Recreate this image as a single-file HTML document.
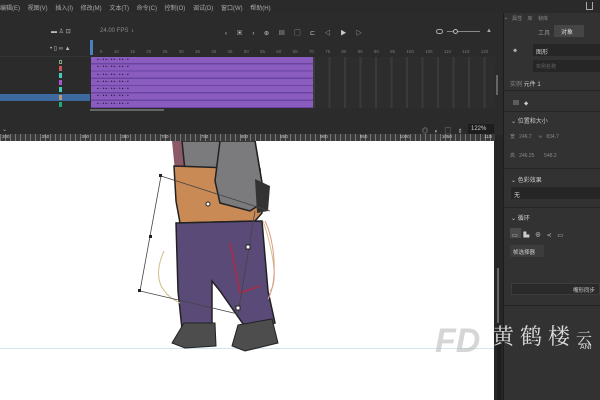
<!DOCTYPE html>
<html><head><meta charset="utf-8"><style>
*{margin:0;padding:0;box-sizing:border-box}
html,body{width:600px;height:400px;overflow:hidden}
body{background:#262626;position:relative;font-family:"Liberation Sans","Noto Sans CJK SC",sans-serif;color:#bbb}
.a{position:absolute}
.t{font-size:6px;color:#aaa;white-space:nowrap}
</style></head><body>
<div class="a" style="left:0;top:0;width:600px;height:13px;background:#2a2a2a"></div>
<div class="a t" style="left:0;top:3px;word-spacing:6px">编辑(E) 视图(V) 插入(I) 修改(M) 文本(T) 命令(C) 控制(O) 调试(D) 窗口(W) 帮助(H)</div>
<div class="a" style="left:586px;top:2px;width:7px;height:8px;border:1px solid #aaa;border-top:none"></div>
<div class="a" style="left:0;top:13px;width:503px;height:122px;background:#2b2b2b"></div>
<div class="a t" style="left:100px;top:28px;color:#888">24.00 FPS</div>
<div class="a t" style="left:131px;top:28px">↓</div>
<div class="a t" style="left:51px;top:28px;color:#bbb">▬ ♙ ⊡</div>
<div class="a t" style="left:50px;top:45px;color:#bbb">• ▯ ∞ ▲</div>
<div class="a t" style="left:225px;top:28px;color:#ccc;word-spacing:8px">‹ ▣ › ⊛ ▤ ▢ ⊏ ◁ ▶ ▷</div>
<div class="a" style="left:436px;top:29px;width:7px;height:5px;border:1px solid #aaa;border-radius:3px"></div>
<div class="a" style="left:447px;top:31px;width:33px;height:1px;background:#888"></div>
<div class="a" style="left:453px;top:29px;width:5px;height:5px;border:1px solid #bbb;border-radius:50%;background:#2b2b2b"></div>
<div class="a t" style="left:486px;top:28px">▲</div>
<div class="a" style="left:90px;top:40px;width:3px;height:15px;background:#4a7fc0"></div>
<div class="a t" style="left:100px;top:49px;font-size:4.5px;color:#777;word-spacing:10px;width:395px;overflow:hidden">5 10 15 20 25 30 35 40 45 50 55 60 65 70 75 80 85 90 95 100 105 110 115 120 125</div>
<div class="a" style="left:0;top:56px;width:90px;height:1px;background:#333"></div>
<div class="a" style="left:0;top:94px;width:90px;height:7px;background:#3d6a9e"></div>
<div class="a" style="left:59px;top:60px;width:3px;height:4px;border:1px solid #7a7"></div>
<div class="a" style="left:59px;top:66px;width:3px;height:5px;background:#c55"></div>
<div class="a" style="left:59px;top:73px;width:3px;height:5px;background:#4cb"></div>
<div class="a" style="left:59px;top:80px;width:3px;height:5px;background:#a5c"></div>
<div class="a" style="left:59px;top:87px;width:3px;height:5px;background:#4cb"></div>
<div class="a" style="left:59px;top:95px;width:3px;height:5px;background:#b97"></div>
<div class="a" style="left:59px;top:102px;width:3px;height:5px;background:#2a7"></div>
<div class="a" style="left:313px;top:57px;width:182px;height:51px;background:repeating-linear-gradient(90deg,#3a3a3a 0 2px,#2d2d2d 2px 15.5px)"></div>
<div class="a" style="left:91px;top:57px;width:222px;height:51px;background:repeating-linear-gradient(180deg,#8a5cc0 0 6px,#6a45a0 6px 7.3px)"></div>
<div class="a t" style="left:97px;top:57px;font-size:5px;line-height:7.3px;color:#2a1a40;letter-spacing:1px">▪·•▪·•▪·•▪·•<br>▪·•▪·•▪·•▪·•<br>▪·•▪·•▪·•▪·•<br>▪·•▪·•▪·•▪·•<br>▪·•▪·•▪·•▪·•<br>▪·•▪·•▪·•▪·•<br>▪·•▪·•▪·•▪·•</div>
<div class="a" style="left:90px;top:109px;width:74px;height:2px;background:#666"></div>
<div class="a" style="left:496px;top:75px;width:2px;height:20px;background:#666"></div>
<div class="a t" style="left:2px;top:126px">⌄</div>
<div class="a t" style="left:422px;top:126px;color:#bbb;word-spacing:5px">◎ ◐ ▢ ⇕</div>
<div class="a" style="left:468px;top:124px;width:26px;height:10px;background:#1e1e1e;font-size:6px;padding:2px 3px;color:#ccc;overflow:hidden">122% ⌄</div>
<div class="a" style="left:0;top:134px;width:495px;height:7px;background:#3a3a3a;background-image:repeating-linear-gradient(90deg,#777 0 1px,transparent 1px 5px)"></div>
<div class="a t" style="left:2px;top:134px;font-size:4.5px;color:#ccc;word-spacing:31px;width:490px;overflow:hidden">200 250 300 350 700 750 800 850 900 950 1000 1050 1100 1150 1200 1250 1300 1350</div>
<div class="a" style="left:0;top:141px;width:494px;height:259px;background:#fff"></div>
<div class="a" style="left:0;top:348px;width:494px;height:1px;background:#cfe6ea"></div>
<svg class="a" style="left:120px;top:141px" width="200" height="220">
<path d="M52 0 L82 0 L80 25 L55 30 Z" fill="#8c5a66"/>
<path d="M62 0 L135 0 L140 30 L145 60 L125 70 L72 70 L65 30 Z" fill="#7b7b7e" stroke="#222" stroke-width="1.5"/>
<path d="M54 25 L140 28 L142 72 L135 80 L60 82 L56 60 Z" fill="#c98a55" stroke="#222" stroke-width="1.5"/>
<path d="M100 0 L135 0 L140 30 L145 60 L130 70 L100 62 L95 40 Z" fill="#7b7b7e" stroke="#222" stroke-width="1.5"/>
<path d="M135 38 L150 45 L148 70 L137 72 Z" fill="#333"/>
<path d="M56 82 L142 80 L148 150 L155 182 L128 190 L100 150 L92 140 L92 190 L62 188 L58 150 Z" fill="#5a4a78" stroke="#222" stroke-width="1.5"/>
<path d="M64 182 L95 182 L96 205 L65 207 L52 202 Z" fill="#4d4d4d" stroke="#222"/>
<path d="M118 184 L152 178 L158 202 L125 210 L112 205 Z" fill="#4d4d4d" stroke="#222"/>
<path d="M110 102 L120 152 L140 145" stroke="#a03050" stroke-width="1.8" fill="none"/>
<path d="M44 110 C35 130 35 150 60 162 M143 80 C150 100 160 140 150 150" stroke="#cfc08a" fill="none"/>
<path d="M145 80 C155 100 158 140 148 158" stroke="#d98" fill="none"/>
<path d="M41 35 L150 70 M41 35 L20 150 L118 173 L135 70" stroke="#444" fill="none" stroke-width="0.8"/>
<rect x="39" y="33" width="3" height="3" fill="#222"/><rect x="18" y="148" width="3" height="3" fill="#222"/><rect x="29" y="94" width="3" height="3" fill="#222"/>
<rect x="116" y="165" width="4" height="4" fill="#fff" stroke="#222"/>
<rect x="126" y="104" width="4" height="4" fill="#fff" stroke="#222"/>
<circle cx="88" cy="63" r="2" fill="#fff" stroke="#222"/>
</svg>
<div class="a" style="left:435px;top:322px;font-size:34px;color:#bbb;font-style:italic;font-weight:bold;opacity:.6">FD</div>
<div class="a" style="left:497px;top:335px;width:4px;height:65px;background:#1e1e1e"></div>
<div class="a" style="left:497px;top:268px;width:2px;height:55px;background:#666"></div>
<div class="a" style="left:503px;top:13px;width:97px;height:387px;background:#323232;border-left:1px solid #1c1c1c;overflow:hidden"></div>
<div class="a t" style="left:505px;top:15px;font-size:5px;color:#888;word-spacing:4px">▪ 属性 库 帧库</div>
<div class="a t" style="left:538px;top:28px;color:#888">工具</div>
<div class="a" style="left:554px;top:25px;width:30px;height:12px;background:#454545;font-size:6px;color:#ddd;padding:2px 7px">对象</div>
<div class="a t" style="left:513px;top:48px">⬥</div>
<div class="a" style="left:533px;top:44px;width:67px;height:12px;background:#262626;font-size:6px;color:#ccc;padding:3px">图形</div>
<div class="a" style="left:533px;top:60px;width:67px;height:12px;background:#262626;font-size:5px;color:#666;padding:3px">实例名称</div>
<div class="a t" style="left:510px;top:79px;color:#888">实例 <span style="color:#ccc">元件 1</span></div>
<div class="a" style="left:503px;top:90px;width:97px;height:1px;background:#252525"></div>
<div class="a t" style="left:513px;top:98px;color:#ccc">▤ &nbsp; ⬥</div>
<div class="a" style="left:503px;top:111px;width:97px;height:1px;background:#252525"></div>
<div class="a t" style="left:511px;top:116px;color:#ccc">⌄ 位置和大小</div>
<div class="a t" style="left:510px;top:133px;font-size:5px;color:#888">宽 &nbsp; 246.7 &nbsp; &nbsp; ∞ &nbsp; 834.7</div>
<div class="a t" style="left:510px;top:152px;font-size:5px;color:#888">高 &nbsp; 246.25 &nbsp; &nbsp; &nbsp; 548.2</div>
<div class="a" style="left:503px;top:168px;width:97px;height:1px;background:#252525"></div>
<div class="a t" style="left:511px;top:175px;color:#ccc">⌄ 色彩效果</div>
<div class="a" style="left:511px;top:187px;width:89px;height:12px;background:#262626;font-size:6px;color:#ccc;padding:3px">无</div>
<div class="a" style="left:503px;top:207px;width:97px;height:1px;background:#252525"></div>
<div class="a t" style="left:511px;top:213px;color:#ccc">⌄ 循环</div>
<div class="a" style="left:510px;top:228px;width:11px;height:10px;background:#4a4a4a"></div>
<div class="a t" style="left:512px;top:230px;color:#ccc;word-spacing:4px">▭ ▙ ⊕ ≺ ▭</div>
<div class="a" style="left:510px;top:245px;width:34px;height:12px;background:#3c3c3c;font-size:5.5px;color:#ccc;padding:3px">帧选择器</div>
<div class="a" style="left:511px;top:283px;width:89px;height:12px;background:#2a2a2a;border:1px solid #3c3c3c;font-size:5.5px;color:#ccc;padding:2px 0 0 61px">嘴形同步</div>
<div class="a" style="left:503px;top:305px;width:97px;height:1px;background:#252525"></div>
<div class="a" style="left:488px;top:318px;width:112px;height:40px;overflow:hidden">
<div style="position:absolute;left:4px;top:2px;font-family:'Noto Serif CJK SC',serif;font-size:22px;color:#ddd;letter-spacing:6px;white-space:nowrap">黄鹤楼<span style="font-size:16px">云</span></div>
<div style="position:absolute;left:92px;top:26px;font-size:7px;color:#ddd">ANI</div>
</div>
</body></html>
